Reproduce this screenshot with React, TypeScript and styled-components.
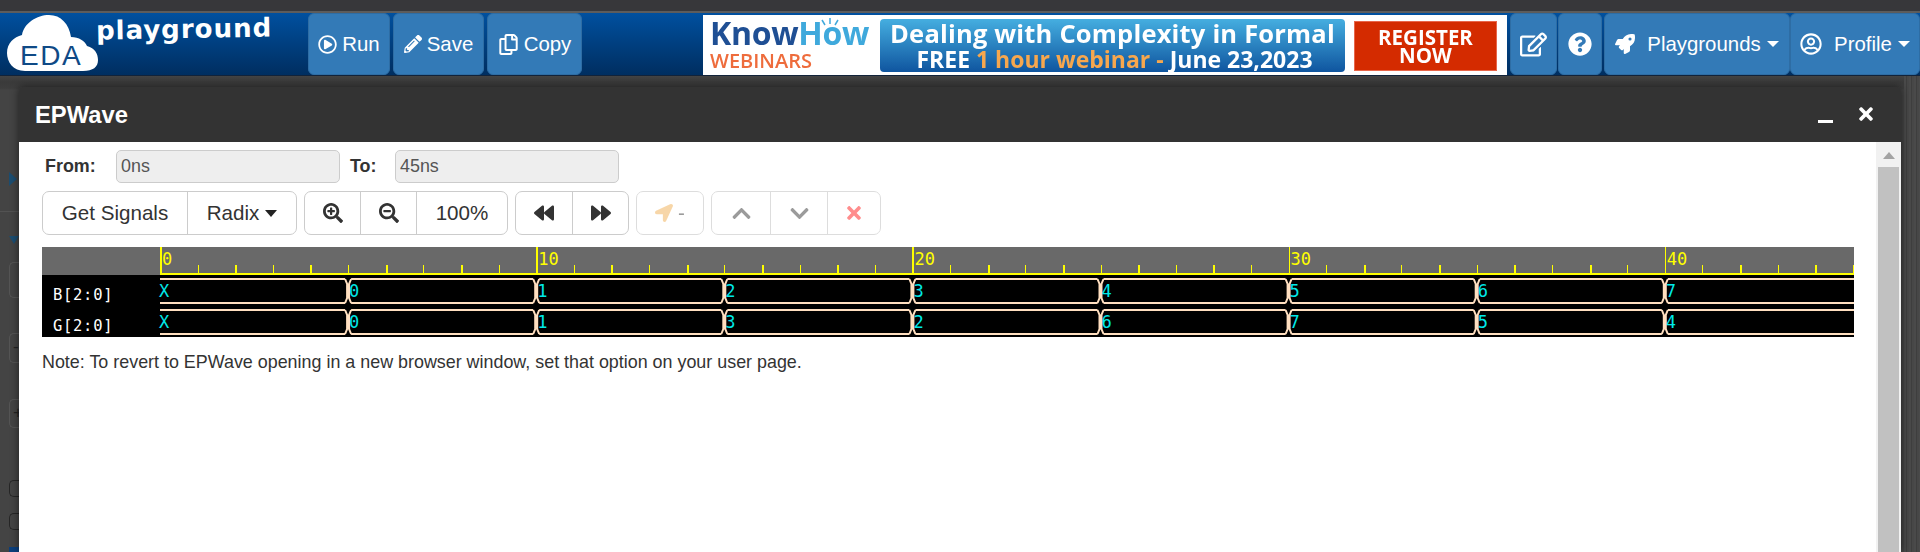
import styled, { createGlobalStyle } from "styled-components";
import {
  FaBackward,
  FaChevronDown,
  FaChevronUp,
  FaForward,
  FaLocationArrow,
  FaPencilAlt,
  FaQuestionCircle,
  FaRegCopy,
  FaRegEdit,
  FaRegPlayCircle,
  FaRegUserCircle,
  FaRocket,
  FaSearchMinus,
  FaSearchPlus,
  FaTimes,
} from "react-icons/fa";

const TICK = 37.62;
const ORIGIN = 118;

const traces = [
  { name: "B[2:0]", top: 32, values: ["X", "0", "1", "2", "3", "4", "5", "6", "7"] },
  { name: "G[2:0]", top: 63, values: ["X", "0", "1", "3", "2", "6", "7", "5", "4"] },
];

const tracePath = (top: number) => {
  const bottom = top + 24;
  let upper = `M${ORIGIN} ${top}`;
  let lower = `M${ORIGIN} ${bottom}`;
  let cross = "";
  for (let k = 1; k <= 8; k++) {
    const x = ORIGIN + TICK * 5 * k;
    upper += ` L${x - 3} ${top} M${x + 3} ${top}`;
    lower += ` L${x - 3} ${bottom} M${x + 3} ${bottom}`;
    cross += ` M${x - 3} ${top} L${x - 1} ${top + 5} L${x - 1} ${bottom - 5} L${x - 3} ${bottom}`;
    cross += ` M${x + 3} ${top} L${x + 1} ${top + 5} L${x + 1} ${bottom - 5} L${x + 3} ${bottom}`;
  }
  return `${upper} L1812 ${top} ${lower} L1812 ${bottom}${cross}`;
};

const Waveform = () => (
  <WaveSvg width={1812} height={90} viewBox="0 0 1812 90">
    <rect x={0} y={0} width={1812} height={28} fill="#696969" />
    <rect x={0} y={28} width={1812} height={62} fill="#000" />
    <rect x={ORIGIN} y={26} width={1694} height={2} fill="#ffff00" />
    {Array.from({ length: 46 }, (_, i) => (
      <rect
        key={i}
        x={ORIGIN + TICK * i}
        y={i % 10 === 0 ? 0 : 18}
        width={i % 10 === 0 ? 1.5 : i % 2 === 0 ? 2 : 1}
        height={i % 10 === 0 ? 28 : 8}
        fill="#ffff00"
        shapeRendering="crispEdges"
      />
    ))}
    {[0, 10, 20, 30, 40].map((n) => (
      <RulerText key={n} x={ORIGIN + TICK * n + 2} y={18}>
        {n}
      </RulerText>
    ))}
    {traces.map((t) => (
      <g key={t.name}>
        <SignalName x={11} y={t.top + 20.5}>
          {t.name}
        </SignalName>
        <path d={tracePath(t.top)} fill="none" stroke="#ffdfc0" strokeWidth={2} />
        {t.values.map((v, k) => (
          <ValueText key={k} x={ORIGIN + TICK * 5 * k + (k === 0 ? -1 : 1)} y={t.top + 18}>
            {v}
          </ValueText>
        ))}
      </g>
    ))}
  </WaveSvg>
);

const Logo = () => (
  <LogoBox>
    <svg width={92} height={57} viewBox="0 0 92 57">
      <path
        d="M18 56 C6 56 0 47 0 38 C0 28 7 22 15 20 C17 8 30 0 42 0 C54 0 62 9 64 22 C72 22 78 26 80 31 C88 33 91 39 91 45 C91 52 86 56 76 56 Z"
        fill="#fff"
      />
      <LogoMark x={13} y={50}>
        EDA
      </LogoMark>
    </svg>
    <LogoWord>playground</LogoWord>
  </LogoBox>
);

export default function App() {
  return (
    <Page>
      <GlobalStyle />
      <TopStrip />
      <NavBar>
        <Logo />
        <NavButton $width={82}>
          <FaRegPlayCircle size={19} /> Run
        </NavButton>
        <NavButton $width={91} $ml={3}>
          <FaPencilAlt size={18} /> Save
        </NavButton>
        <NavButton $width={95} $ml={3}>
          <FaRegCopy size={21} /> Copy
        </NavButton>
        <Banner>
          <KnowHow>
            <BulbRays width={24} height={8} viewBox="0 0 24 8">
              <path d="M12 0 V6 M4 2 L7 7 M20 2 L17 7" stroke="#3fa9dc" strokeWidth={1.5} fill="none" />
            </BulbRays>
            <KnowWord>
              Know<HowPart>How</HowPart>
            </KnowWord>
            <Webinars>WEBINARS</Webinars>
          </KnowHow>
          <BannerBox>
            <BannerTitle>Dealing with Complexity in Formal</BannerTitle>
            <BannerSub>
              FREE <Orange>1 hour webinar -</Orange> June 23,2023
            </BannerSub>
          </BannerBox>
          <Register>
            REGISTER
            <br />
            NOW
          </Register>
        </Banner>
        <NavButton $width={47} $ml={3}>
          <FaRegEdit size={27} />
        </NavButton>
        <NavButton $width={44} $ml={1}>
          <FaQuestionCircle size={24} />
        </NavButton>
        <NavButton $width={186} $ml={2}>
          <FaRocket size={20} />
          <NavLabel>Playgrounds</NavLabel>
          <Caret $color="#fff" />
        </NavButton>
        <NavButton $width={130}>
          <FaRegUserCircle size={22} />
          <NavLabel>Profile</NavLabel>
          <Caret $color="#fff" />
        </NavButton>
      </NavBar>
      <Backdrop>
        <Rail>
          <RailArrow />
          <RailDivider />
          <RailArrowDown />
          <RailBox $mt={18} $height={36} />
          <RailBox $mt={35} $height={30}>
            -
          </RailBox>
          <RailBox $mt={36} $height={29}>
            +
          </RailBox>
          <RailBox $mt={52} $height={17} $dark />
          <RailBox $mt={16} $height={17} $dark />
          <RailBlue />
        </Rail>
        <RightRail />
      </Backdrop>
      <Modal>
        <ModalHeader>
          <ModalTitle>EPWave</ModalTitle>
          <Minimize />
          <CloseIcon size={20} />
        </ModalHeader>
        <ModalBody>
          <Content>
            <RangeRow>
              <RangeLabel $width={71}>From:</RangeLabel>
              <RangeInput readOnly value="0ns" />
              <RangeLabel $width={45} $ml={10}>
                To:
              </RangeLabel>
              <RangeInput readOnly value="45ns" />
            </RangeRow>
            <ButtonRow>
              <BtnGroup $faded={false}>
                <Btn $width={144}>Get Signals</Btn>
                <Btn $width={109}>
                  Radix <Caret $color="#222" $tall />
                </Btn>
              </BtnGroup>
              <BtnGroup $faded={false}>
                <Btn $width={55}>
                  <FaSearchPlus size={20} />
                </Btn>
                <Btn $width={56}>
                  <FaSearchMinus size={20} />
                </Btn>
                <Btn $width={91}>100%</Btn>
              </BtnGroup>
              <BtnGroup $faded={false}>
                <Btn $width={56}>
                  <FaBackward size={20} />
                </Btn>
                <Btn $width={56}>
                  <FaForward size={20} />
                </Btn>
              </BtnGroup>
              <BtnGroup $faded>
                <Btn $width={66}>
                  <ArrowIcon size={18} /> <Dash>-</Dash>
                </Btn>
              </BtnGroup>
              <BtnGroup $faded>
                <Btn $width={58}>
                  <GreyUp size={21} />
                </Btn>
                <Btn $width={57}>
                  <GreyDown size={21} />
                </Btn>
                <Btn $width={53}>
                  <RedCross size={20} />
                </Btn>
              </BtnGroup>
            </ButtonRow>
            <Waveform />
            <Note>
              Note: To revert to EPWave opening in a new browser window, set that option on your user page.
            </Note>
          </Content>
          <Scrollbar>
            <ScrollArrow />
            <ScrollThumb />
          </Scrollbar>
        </ModalBody>
      </Modal>
    </Page>
  );
}

const GlobalStyle = createGlobalStyle`
  html, body {
    margin: 0;
    padding: 0;
    background: #3c3c3c;
    overflow: hidden;
  }
  * {
    box-sizing: border-box;
  }
`;

const Page = styled.div`
  position: relative;
  width: 1920px;
  height: 552px;
  display: flex;
  flex-direction: column;
  overflow: hidden;
  font-family: "Liberation Sans", Arial, sans-serif;
  font-size: 17.9px;
  color: #333;
`;

const TopStrip = styled.div`
  height: 13px;
  flex: none;
  background: #37373a;
  border-bottom: 2px solid #5c5c5c;
`;

const NavBar = styled.div`
  height: 63px;
  flex: none;
  display: flex;
  background: linear-gradient(#00509f, #002e60);
  border-bottom: 1px solid #12233a;
`;

const LogoBox = styled.div`
  width: 308px;
  flex: none;
  display: flex;
  padding: 2px 0 0 7px;
`;

const LogoMark = styled.text`
  font-family: "Liberation Sans", Arial, sans-serif;
  font-size: 28px;
  letter-spacing: 1.5px;
  fill: #0f4a86;
`;

const LogoWord = styled.div`
  font-family: "DejaVu Sans", sans-serif;
  font-weight: 700;
  font-size: 26px;
  line-height: 28px;
  color: #fff;
  margin: 0 0 0 -3px;
  letter-spacing: 1px;
  transform: rotate(-1deg);
  height: 30px;
`;

const NavButton = styled.div<{ $width: number; $ml?: number }>`
  width: ${(p) => p.$width}px;
  margin-left: ${(p) => p.$ml ?? 0}px;
  height: 62px;
  flex: none;
  display: flex;
  align-items: center;
  justify-content: center;
  gap: 5px;
  background: #337ab7;
  border: 1px solid #2e6da4;
  border-radius: 6px;
  color: #fff;
  font-size: 20.4px;
`;

const NavLabel = styled.span`
  margin: 0 0 0 7px;
`;

const Caret = styled.span<{ $color: string; $tall?: boolean }>`
  display: inline-block;
  width: 0;
  height: 0;
  margin-left: 1px;
  border-top: ${(p) => (p.$tall ? 7 : 6)}px solid ${(p) => p.$color};
  border-left: 6px solid transparent;
  border-right: 6px solid transparent;
  vertical-align: middle;
`;

const Banner = styled.div`
  width: 804px;
  height: 60px;
  margin: 2px 0 0 121px;
  flex: none;
  display: flex;
  background: #fff;
  padding: 4px 10px 3px 7px;
  filter: blur(0.35px);
`;

const KnowHow = styled.div`
  position: relative;
  width: 170px;
  flex: none;
  display: flex;
  flex-direction: column;
  margin-top: -1px;
  font-family: "Open Sans", sans-serif;
  font-weight: 700;
`;

const BulbRays = styled.svg`
  position: absolute;
  left: 108px;
  top: 0;
`;

const KnowWord = styled.div`
  font-size: 32px;
  line-height: 30px;
  letter-spacing: -0.3px;
  color: #1f4f94;
`;

const HowPart = styled.span`
  color: #3fa9dc;
`;

const Webinars = styled.div`
  font-size: 20px;
  line-height: 18px;
  margin-top: 4px;
  color: #ee6c3c;
  font-weight: 600;
`;

const BannerBox = styled.div`
  width: 465px;
  flex: none;
  height: 53px;
  border-radius: 4px;
  background: linear-gradient(#45aee0, #0f559f);
  color: #fff;
  font-family: "Open Sans", sans-serif;
  font-weight: 700;
  text-align: center;
  white-space: nowrap;
`;

const BannerTitle = styled.div`
  font-size: 25.5px;
  line-height: 28px;
  letter-spacing: 0.2px;
`;

const BannerSub = styled.div`
  font-size: 23px;
  line-height: 24px;
  padding-left: 4px;
`;

const Orange = styled.span`
  color: #f7a74e;
`;

const Register = styled.div`
  width: 143px;
  height: 50px;
  margin: 2px 0 0 9px;
  flex: none;
  background: #d42b00;
  border: 1px solid #e8664a;
  color: #fff;
  font-family: "Open Sans", sans-serif;
  font-weight: 700;
  font-size: 20.5px;
  line-height: 18px;
  text-align: center;
  padding-top: 6px;
`;

const Backdrop = styled.div`
  flex: 1;
  display: flex;
  justify-content: space-between;
  background: linear-gradient(#434343, #3a3a3a 6px, #3d3d3d 12px, #444 14px);
`;

const Rail = styled.div`
  width: 19px;
  padding-left: 9px;
  display: flex;
  flex-direction: column;
`;

const RailArrow = styled.div`
  width: 0;
  height: 0;
  margin-top: 96px;
  border-left: 8px solid #1c4d70;
  border-top: 7px solid transparent;
  border-bottom: 7px solid transparent;
`;

const RailDivider = styled.div`
  height: 1px;
  margin: 25px 0 0 -9px;
  width: 19px;
  background: #525252;
`;

const RailArrowDown = styled.div`
  width: 0;
  height: 0;
  margin-top: 24px;
  border-top: 8px solid #1c4d70;
  border-left: 5px solid transparent;
  border-right: 5px solid transparent;
`;

const RailBox = styled.div<{ $mt: number; $height: number; $dark?: boolean }>`
  height: ${(p) => p.$height}px;
  margin-top: ${(p) => p.$mt}px;
  border: 1px solid ${(p) => (p.$dark ? "#262626" : "#555")};
  border-right: none;
  border-radius: 5px 0 0 5px;
  padding-left: 3px;
  font-size: 17px;
  line-height: 26px;
  color: #222;
`;

const RailBlue = styled.div`
  height: 5px;
  margin-top: 17px;
  background: #0c3f7c;
`;

const RightRail = styled.div`
  width: 16px;
  background: repeating-linear-gradient(90deg, #4a4a4a 0 2px, #3e3e3e 2px 3px, #474747 3px 5px);
`;

const Modal = styled.div`
  position: absolute;
  left: 19px;
  top: 87px;
  width: 1882px;
  bottom: 0;
  display: flex;
  flex-direction: column;
  box-shadow: 0 0 8px rgba(0, 0, 0, 0.55);
  border-radius: 4px 4px 0 0;
  overflow: hidden;
`;

const ModalHeader = styled.div`
  height: 55px;
  flex: none;
  display: flex;
  align-items: center;
  background: #333;
  color: #fff;
  padding: 0 25px 0 16px;
`;

const ModalTitle = styled.div`
  font-size: 23.8px;
  font-weight: 700;
  flex: 1;
`;

const Minimize = styled.div`
  width: 15px;
  height: 3px;
  background: #fff;
  margin: 14px 23px 0 0;
`;

const CloseIcon = styled(FaTimes)`
  color: #fff;
  margin-top: -2px;
`;

const ModalBody = styled.div`
  flex: 1;
  display: flex;
  background: #fff;
  min-height: 0;
`;

const Content = styled.div`
  flex: 1;
  padding: 8px 0 0 23px;
`;

const RangeRow = styled.div`
  display: flex;
  align-items: center;
  height: 33px;
  padding-left: 3px;
`;

const RangeLabel = styled.label<{ $width: number; $ml?: number }>`
  width: ${(p) => p.$width}px;
  margin-left: ${(p) => p.$ml ?? 0}px;
  font-weight: 700;
  font-size: 17.9px;
`;

const RangeInput = styled.input`
  width: 224px;
  height: 33px;
  padding: 0 4px;
  background: #eee;
  border: 1px solid #ccc;
  border-radius: 5px;
  font-family: inherit;
  font-size: 17.9px;
  color: #555;
  outline: none;
`;

const ButtonRow = styled.div`
  display: flex;
  gap: 7px;
  margin-top: 8px;
`;

const BtnGroup = styled.div<{ $faded: boolean }>`
  display: flex;
  height: 44px;
  border: 1px solid #ccc;
  border-radius: 7px;
  opacity: ${(p) => (p.$faded ? 0.65 : 1)};
`;

const Btn = styled.div<{ $width: number }>`
  width: ${(p) => p.$width}px;
  display: flex;
  align-items: center;
  justify-content: center;
  gap: 5px;
  font-size: 20.6px;
  color: #333;
  border-left: 1px solid #ccc;
  &:first-child {
    border-left: none;
  }
`;

const ArrowIcon = styled(FaLocationArrow)`
  color: #f0ad4e;
  opacity: 0.75;
`;

const Dash = styled.span`
  color: #666;
`;

const GreyUp = styled(FaChevronUp)`
  color: #666;
`;

const GreyDown = styled(FaChevronDown)`
  color: #666;
`;

const RedCross = styled(FaTimes)`
  color: #f33;
  opacity: 0.85;
`;

const WaveSvg = styled.svg`
  display: block;
  margin-top: 12px;
`;

const RulerText = styled.text`
  font-family: "DejaVu Sans Mono", monospace;
  font-size: 17px;
  fill: #ffff00;
`;

const SignalName = styled.text`
  font-family: "DejaVu Sans Mono", monospace;
  font-size: 15.5px;
  letter-spacing: 0.7px;
  fill: #fff;
`;

const ValueText = styled.text`
  font-family: "DejaVu Sans Mono", monospace;
  font-size: 17px;
  fill: #00e8e8;
`;

const Note = styled.p`
  margin: 15px 0 0;
  font-size: 17.9px;
  line-height: 20px;
  color: #333;
`;

const Scrollbar = styled.div`
  width: 25px;
  flex: none;
  display: flex;
  flex-direction: column;
  align-items: center;
  background: #f1f1f1;
`;

const ScrollArrow = styled.div`
  width: 0;
  height: 0;
  margin-top: 10px;
  border-bottom: 7px solid #a3a3a3;
  border-left: 6px solid transparent;
  border-right: 6px solid transparent;
`;

const ScrollThumb = styled.div`
  width: 21px;
  flex: 1;
  margin-top: 8px;
  background: #c1c1c1;
`;
